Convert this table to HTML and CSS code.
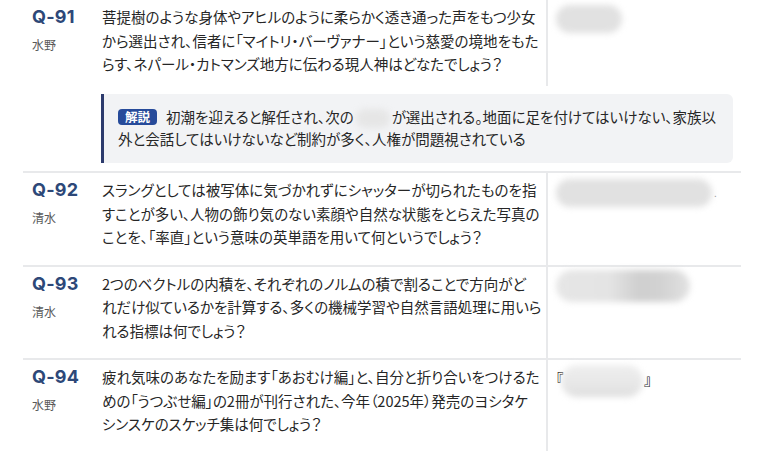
FILE: index.html
```html
<!DOCTYPE html>
<html lang="ja">

<head>
    <meta charset="UTF-8">
    <meta name="viewport" content="width=device-width, initial-scale=1.0">
    <title>問題一覧 Q-91〜Q-94</title>
    <link rel="stylesheet" href="styles.css">
</head>

<body>
    <main class="qa">
        <div class="row">
            <div class="no">
                <span class="qno">Q-91</span>
                <span class="by">水野</span>
            </div>
            <div class="q q-noted">菩提樹のような身体やアヒルのように柔らかく透き通った声をもつ少女<br>から選出され、信者に「マイトリ・バーヴァナー」という慈愛の境地をもた<br>らす、ネパール・カトマンズ地方に伝わる現人神はどなたでしょう？</div>
            <div class="a">
                <span class="mask mask-91"></span>
            </div>
            <div class="note">
                <span class="tag">解説</span>初潮を迎えると解任され、次の<span class="mask mask-inline"></span>が選出される。地面に足を付けてはいけない、家族以<br>外と会話してはいけないなど制約が多く、人権が問題視されている
            </div>
        </div>

        <div class="row">
            <div class="no">
                <span class="qno">Q-92</span>
                <span class="by">清水</span>
            </div>
            <div class="q">スラングとしては被写体に気づかれずにシャッターが切られたものを指<br>すことが多い、人物の飾り気のない素顔や自然な状態をとらえた写真の<br>ことを、「率直」という意味の英単語を用いて何というでしょう？</div>
            <div class="a">
                <span class="mask mask-92"></span><span class="tail">.</span>
            </div>
        </div>

        <div class="row">
            <div class="no">
                <span class="qno">Q-93</span>
                <span class="by">清水</span>
            </div>
            <div class="q">2つのベクトルの内積を、それぞれのノルムの積で割ることで方向がど<br>れだけ似ているかを計算する、多くの機械学習や自然言語処理に用いら<br>れる指標は何でしょう？</div>
            <div class="a">
                <span class="mask mask-93"></span>
            </div>
        </div>

        <div class="row">
            <div class="no">
                <span class="qno">Q-94</span>
                <span class="by">水野</span>
            </div>
            <div class="q">疲れ気味のあなたを励ます「あおむけ編」と、自分と折り合いをつけるた<br>めの「うつぶせ編」の2冊が刊行された、今年（2025年）発売のヨシタケ<br>シンスケのスケッチ集は何でしょう？</div>
            <div class="a"><span class="bracket">『</span><span class="mask mask-94"></span><span class="bracket">』</span></div>
        </div>
    </main>
</body>

</html>
```

FILE: styles.css
```css
body {
    margin: 0;
    background-color: #fff;
    color: #262626;
    font-family: "Noto Sans CJK JP", sans-serif;
    font-size: 14.5px;
    line-height: 23.5px;
    font-feature-settings: "palt";
}

.qa {
    width: 718px;
    margin-left: 23px;
}

.row {
    display: grid;
    grid-template-columns: 79px 444px 195px;
    border-top: 2px solid #e8e9eb;
}

.row:first-child {
    border-top: none;
}

.no {
    display: flex;
    flex-direction: column;
    padding: 5px 0 0 9px;
}

.qno {
    font-family: Inter, "Noto Sans", sans-serif;
    font-size: 18px;
    font-weight: 700;
    line-height: 24px;
    letter-spacing: 0.2px;
    color: #2d4878;
}

.by {
    margin-top: 7px;
    font-size: 12px;
    line-height: 18px;
    color: #5a5a5a;
}

.q {
    padding: 5px 0 16px 0;
    white-space: nowrap;
}

.q-noted {
    padding-bottom: 10px;
}

.a {
    padding: 5px 0 0 8px;
    border-left: 2px solid #e8e9eb;
}

.note {
    grid-column: 2 / 4;
    margin: 8px 8px 8px -1px;
    padding: 12px 14px 13px 14px;
    background-color: #f2f3f5;
    border-left: 3px solid #2d3b6d;
    border-radius: 0 6px 6px 0;
    line-height: 22px;
    white-space: nowrap;
}

.tag {
    display: inline-block;
    margin-right: 9px;
    padding: 0 7px;
    background-color: #274b9a;
    color: #fff;
    font-size: 12.5px;
    font-weight: 700;
    line-height: 16px;
    border-radius: 4px;
    vertical-align: 1px;
}

.mask {
    display: inline-block;
    height: 28px;
    background-color: #e1e1e1;
    border-radius: 14px;
    filter: blur(3px);
    vertical-align: middle;
}

.mask-inline {
    width: 34px;
    height: 19px;
    margin: 0 2px;
    background-color: #e6e6e6;
    border-radius: 10px;
}

.mask-91 {
    width: 66px;
}

.mask-92 {
    width: 156px;
    margin-top: 1px;
}

.mask-93 {
    width: 134px;
    height: 32px;
    margin-top: -2px;
    background: linear-gradient(90deg, #e6e6e6 0%, #e4e4e4 40%, #cfcfcf 62%, #d2d2d2 78%, #e2e2e2 100%);
    border-radius: 16px;
}

.bracket {
    font-weight: 700;
    color: #222;
}

.mask-94 {
    width: 82px;
    height: 32px;
    margin: 0 1px 0 -2px;
    background: linear-gradient(180deg, #eeeeee 0%, #e8e8e8 60%, #dedede 100%);
    border-radius: 16px;
}

.tail {
    margin-left: 2px;
    color: #999;
    font-size: 10px;
}
```
